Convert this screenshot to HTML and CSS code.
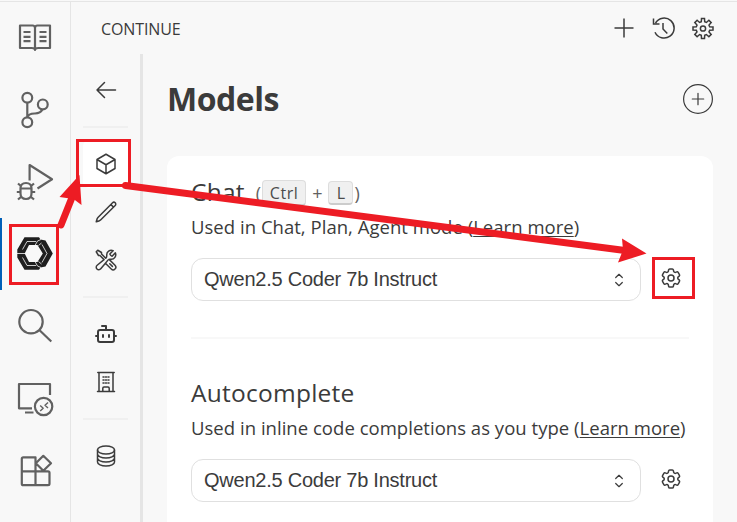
FILE: index.html
```html
<!DOCTYPE html>
<html lang="en">
<head>
<meta charset="utf-8">
<title>Continue</title>
<link rel="stylesheet" href="styles.css">
</head>
<body>
<div class="app">
  <nav class="activity">
    <svg viewBox="0 0 70 72"><path d="M20 23.500h12.500q2.500 0 2.500 2.500q0-2.500 2.500-2.500H50v22.500H38.500q-3.500 0-3.500 2q0-2-3.500-2H20zM35 26v22M23.500 30h7M23.500 34.800h7M23.500 39.200h7M39.500 30h7M39.500 34.800h7M39.500 39.200h7"/></svg>
    <svg viewBox="0 0 70 72"><circle cx="27.300" cy="23.700" r="4.900"/><circle cx="42.800" cy="30.400" r="4.900"/><circle cx="27.300" cy="48.300" r="4.900"/><path d="M27.300 28.600v14.800M42.500 35.300q-2 4.200-7.500 4.200q-6.500-.2-7.700 4"/></svg>
    <svg viewBox="0 0 70 72"><path d="M29.600 34.500V19L52 33.300L37.500 42.500"/><path d="M20.500 42.500q0-5.500 5.500-5.500t5.500 5.500v5q0 5.500-5.500 5.500t-5.500-5.500zM20.500 42.500h11M18 37.500l3.500 3M34 37.500l-3.500 3M16.800 46h3.700M31.500 46h3.700M18 53.500l3.500-3M34 53.500l-3.500-3"/></svg>
    <svg class="active" viewBox="0 0 70 72"><path class="ring" d="M24.500 19.200H39L40.500 21.500L45.500 22.500L52.800 35.500L45.500 48.500L40.500 49.500L39 51.800H24.500L17.300 39.500V31.500zM29 27L24.700 35.500L29 44H37.500L42.800 35.500L37.500 27z"/><path class="seams" d="M22.500 31.500L27 23.500H36M42 26.500L47 35.500L42 44.500M36 47.500H27L22.500 39.500M17 35.500h8M35 27.500l2.500-4.500l3.500-1.500M35 43.500l2.500 4.500l3.500 1.500M38.500 27.500l3-2.500M38.500 43.500l3 2.500"/></svg>
    <svg viewBox="0 0 70 72"><circle cx="31" cy="31.700" r="11.700"/><path d="M39.300 40L51.300 51.500"/></svg>
    <svg viewBox="0 0 70 72"><path d="M50 33V22H19v24.300h13M25 50.500h8.500"/><circle cx="43.600" cy="44.500" r="8.700"/><path class="thin" d="M40.200 43.500l3 2.800l-3 2.800M48 40.500l-3 2.800l3 2.800"/></svg>
    <svg viewBox="0 0 70 72"><path d="M21.800 24.800q0-1.500 1.500-1.500H35.500V51.200H23.300q-1.500 0-1.500-1.500zM21.800 37.300H48q1.500 0 1.500 1.500v11q0 1.400-1.500 1.400H35.500M43.300 21.800l7.700 7.500l-7.700 7.500l-7.500-7.500z"/></svg>
  </nav>
  <div class="panel">
    <header class="titlebar">
      <span class="title">CONTINUE</span>
      <div class="actions">
        <svg viewBox="0 0 24 24"><path d="M12 1.500v19M2.500 11h19"/></svg>
        <svg viewBox="0 0 24 24"><path d="M3 15.200A10 10 0 1 0 3.500 6M1.500 1.500v5.500h6M11 6v6l4.300 4.500"/></svg>
        <svg viewBox="0 0 24 24"><path d="M10.300 4.800L10.500 1.500h3l.2 3.300l1.700.7l2.500-2.200l2.300 2.300l-2.200 2.500l.7 1.700l3.300.2v3l-3.300.2l-.7 1.700l2.200 2.500l-2.300 2.300l-2.500-2.200l-1.700.7l-.2 3.300h-3l-.2-3.300l-1.700-.7l-2.500 2.200l-2.300-2.300L6 14.900l-.7-1.700L2 13v-3l3.300-.2L6 8.100L3.800 5.600l2.300-2.300L8.600 5.500z"/><circle cx="12" cy="11.500" r="2.600"/></svg>
      </div>
    </header>
    <div class="body">
      <nav class="sections">
        <div class="cell top"><svg viewBox="0 0 24 24"><path d="M10.500 4.500L3 12l7.500 7.500M3 12h18.500"/></svg></div>
        <hr>
        <div class="group">
          <div class="cell selected"><svg viewBox="0 0 24 24"><path d="M21 7.500l-9-5.250L3 7.500m18 0l-9 5.250m9-5.250v9l-9 5.250M3 7.500l9 5.250M3 7.500v9l9 5.250m0-9v9"/></svg></div>
          <div class="cell"><svg viewBox="0 0 24 24"><path d="M16.860 4.490l1.690-1.690a1.870 1.870 0 1 1 2.650 2.650L6.830 19.820a4.500 4.500 0 0 1-1.900 1.130L2.250 21.750l.8-2.680a4.500 4.500 0 0 1 1.130-1.900zM16.860 4.490L19.500 7.130"/></svg></div>
          <div class="cell"><svg viewBox="0 0 24 24"><path d="M11.420 15.170L17.250 21A2.650 2.650 0 0 0 21 17.250l-5.880-5.880M11.420 15.170l2.500-3.030c.31-.39.740-.63 1.200-.77.560-.16 1.160-.19 1.740-.14a4.500 4.500 0 0 0 4.490-6.340l-3.280 3.280a3 3 0 0 1-2.250-2.250l3.280-3.280a4.500 4.500 0 0 0-6.340 4.490c.09 1.070-.07 2.260-.9 2.940l-.1.090M11.420 15.170l-4.660 5.650a2.550 2.550 0 1 1-3.580-3.590l6.840-5.630M10.020 11.600L5.910 7.500H4.500L2.250 3.750l1.500-1.500L7.500 4.500v1.410l4.260 4.250M18.380 18.380l-2.630-2.630"/></svg></div>
        </div>
        <hr>
        <div class="group">
          <div class="cell"><svg class="bold" viewBox="0 0 24 24"><path d="M12 8V4H8"/><rect x="4" y="8" width="16" height="12" rx="2"/><path d="M2 14h2M20 14h2M9 13v2M15 13v2"/></svg></div>
          <div class="cell"><svg viewBox="0 0 24 24"><path d="M3.500 21.500h17M5 21.500v-19M19 21.500v-19M3.800 2.500h16.400M9 7h1M14 7h1M11.500 7h1M9 10h1M11.500 10h1M14 10h1M9 13h1M11.500 13h1M14 13h1M8.800 21.500v-3.300q0-1.200 1.200-1.200h4q1.200 0 1.200 1.200v3.300"/></svg></div>
        </div>
        <hr>
        <div class="cell data"><svg viewBox="0 0 24 24"><ellipse cx="12" cy="6" rx="8.500" ry="4"/><path d="M3.500 6v12c0 2.200 3.800 4 8.500 4s8.500-1.800 8.500-4V6M3.500 10c0 2.200 3.800 4 8.500 4s8.500-1.800 8.500-4M3.500 14c0 2.200 3.800 4 8.500 4s8.500-1.800 8.500-4"/></svg></div>
      </nav>
      <main class="content">
        <div class="heading">
          <h1>Models</h1>
          <span class="add"><svg viewBox="0 0 30 30"><circle cx="15" cy="15" r="14.400"/><path d="M15 9.300v11.400M9.300 15h11.400"/></svg></span>
        </div>
        <div class="card">
          <section>
            <h2><span>Chat</span><span class="keys">(<kbd class="ctrl">Ctrl</kbd><i>+</i><kbd class="letter">L</kbd>)</span></h2>
            <p>Used in Chat, Plan, Agent mode (<u>Learn more</u>)</p>
            <div class="row">
              <div class="select"><span>Qwen2.5 Coder 7b Instruct</span><svg viewBox="0 0 10 14"><path d="M1.700 4.500L5 1.300l3.300 3.200M1.700 9.500L5 12.700l3.300-3.200"/></svg></div>
              <svg class="gear" viewBox="0 0 24 24"><path d="M9.590 3.940c.09-.54.560-.94 1.110-.94h2.600c.55 0 1.020.4 1.110.94l.21 1.280c.06.380.31.690.65.870.07.040.15.090.22.130.32.200.72.260 1.080.12l1.220-.45a1.130 1.130 0 0 1 1.370.49l1.300 2.240c.27.480.17 1.080-.26 1.430l-1 .83c-.3.240-.44.610-.43.990v.25c-.01.380.13.750.43.990l1 .83c.42.350.53.950.26 1.430l-1.300 2.240c-.27.480-.85.690-1.370.49l-1.220-.45c-.35-.13-.75-.07-1.080.12l-.22.130c-.33.180-.58.490-.64.870l-.22 1.280c-.09.550-.56.950-1.110.95h-2.600c-.55 0-1.020-.4-1.110-.95l-.21-1.280c-.06-.37-.31-.69-.65-.87l-.22-.13c-.32-.19-.72-.25-1.070-.12l-1.220.45c-.52.200-1.100-.01-1.370-.49l-1.300-2.240a1.130 1.130 0 0 1 .26-1.430l1-.83c.29-.24.440-.61.430-.99v-.25c.01-.38-.14-.75-.43-.99l-1-.83a1.130 1.130 0 0 1-.26-1.430l1.300-2.240c.27-.48.850-.69 1.370-.49l1.220.45c.35.140.750.080 1.070-.12l.22-.13c.34-.18.590-.49.650-.87z"/><circle cx="12" cy="12" r="3"/></svg>
            </div>
          </section>
          <hr>
          <section>
            <h2><span>Autocomplete</span></h2>
            <p>Used in inline code completions as you type (<u>Learn more</u>)</p>
            <div class="row">
              <div class="select"><span>Qwen2.5 Coder 7b Instruct</span><svg viewBox="0 0 10 14"><path d="M1.700 4.500L5 1.300l3.300 3.200M1.700 9.500L5 12.700l3.300-3.200"/></svg></div>
              <svg class="gear" viewBox="0 0 24 24"><path d="M9.590 3.940c.09-.54.560-.94 1.110-.94h2.600c.55 0 1.020.4 1.110.94l.21 1.280c.06.380.31.690.65.870.07.040.15.090.22.130.32.200.72.260 1.080.12l1.220-.45a1.130 1.130 0 0 1 1.370.49l1.300 2.240c.27.480.17 1.080-.26 1.430l-1 .83c-.3.240-.44.610-.43.990v.25c-.01.380.13.750.43.990l1 .83c.42.350.53.950.26 1.430l-1.300 2.240c-.27.480-.85.690-1.370.49l-1.220-.45c-.35-.13-.75-.07-1.080.12l-.22.130c-.33.180-.58.490-.64.870l-.22 1.280c-.09.550-.56.950-1.110.95h-2.600c-.55 0-1.020-.4-1.110-.95l-.21-1.280c-.06-.37-.31-.69-.65-.87l-.22-.13c-.32-.19-.72-.25-1.070-.12l-1.220.45c-.52.200-1.100-.01-1.370-.49l-1.300-2.240a1.130 1.130 0 0 1 .26-1.430l1-.83c.29-.24.440-.61.430-.99v-.25c.01-.38-.14-.75-.43-.99l-1-.83a1.130 1.130 0 0 1-.26-1.430l1.300-2.240c.27-.48.850-.69 1.370-.49l1.220.45c.35.140.750.080 1.070-.12l.22-.13c.34-.18.590-.49.650-.87z"/><circle cx="12" cy="12" r="3"/></svg>
            </div>
          </section>
        </div>
      </main>
    </div>
  </div>
</div>
<svg class="annotations" viewBox="0 0 737 522">
  <path class="box" d="M10.500 225.500h47v58h-47zM77.500 140.500h52v45h-52zM653.500 258.500h40v39h-40z"/>
  <path class="shaft" d="M61 225L73 195M125.500 185.500L625 250.500"/>
  <path class="head" d="M79.500 175L81.500 205L73.500 199L59.500 197zM646.500 253.500L622 238.500L623 250L618 262.500z"/>
</svg>
</body>
</html>
```
FILE: styles.css
```css
* { box-sizing: border-box; }
body {
  margin: 0;
  width: 737px;
  height: 522px;
  overflow: hidden;
  background: #f8f8f8;
  color: #3b3b3b;
  font-family: "Open Sans", "Noto Sans", sans-serif;
}
svg { display: block; fill: none; stroke: currentColor; stroke-width: 1.5; stroke-linejoin: round; stroke-linecap: round; }
hr { border: 0; margin: 0; }
.app { display: flex; height: 522px; border-top: 1px solid #f8f8f8; box-shadow: inset 0 1px #e5e5e5; }
.activity { width: 71px; flex: none; padding-top: 1px; border-right: 1px solid #e5e5e5; color: #616161; }
.activity svg { width: 70px; height: 72px; stroke-width: 2.2; stroke-linecap: butt; }
.activity .thin { stroke-width: 1.4; }
.activity .active { color: #1f1f1f; box-shadow: inset 2px 0 #005fb8; }
.activity .ring { fill: currentColor; fill-rule: evenodd; stroke: none; }
.activity .seams { stroke: #f8f8f8; stroke-width: .8; }
.panel { flex: 1; min-width: 0; display: flex; flex-direction: column; }
.titlebar { height: 53px; flex: none; display: flex; justify-content: space-between; align-items: center; padding: 2px 22px 0 30px; }
.title { font-size: 16px; letter-spacing: -.1px; }
.actions { display: flex; gap: 15.5px; }
.actions svg { width: 24px; height: 24px; stroke-linejoin: miter; stroke-linecap: butt; }
.body { flex: 1; min-height: 0; display: flex; }
.sections { width: 72px; flex: none; border-right: 3px solid #e5e5e5; display: flex; flex-direction: column; align-items: center; }
.sections hr { width: 45px; height: 2px; background: #f0f0f0; }
.cell { width: 46px; height: 48px; display: flex; align-items: center; justify-content: center; }
.cell svg { width: 24px; height: 24px; }
.cell .bold { stroke-width: 2; }
.top { height: 72px; }
.group { padding: 12px 0; }
.selected { background: #fff; border-radius: 6px; }
.data { height: 72px; }
.content { flex: 1; padding: 0 24px; min-width: 0; }
.heading { height: 102px; display: flex; align-items: center; justify-content: space-between; padding-bottom: 12px; }
h1 { margin: 0; font-size: 32px; line-height: 40px; font-weight: 700; letter-spacing: -.5px; }
.add svg { width: 30px; height: 30px; stroke-width: 1.2; }
.card { height: 380px; background: #fff; border-radius: 12px; padding: 18px 24px; }
section { height: 163px; }
h2 { margin: 0; height: 36px; padding-bottom: 1px; display: flex; align-items: center; font-size: 24.5px; letter-spacing: .25px; font-weight: 400; white-space: nowrap; }
.keys { display: flex; align-items: center; margin: 3px 0 0 11px; font-size: 18px; letter-spacing: 0; color: #616161; }
.keys i { font-style: normal; margin: 0 6px; }
kbd { display: flex; align-items: center; justify-content: center; font: 16px "Open Sans", sans-serif; color: #4b4b4b; background: #f0f0f0; border: 1px solid #ddd; border-bottom: 2px solid #ccc; border-radius: 4px; }
.ctrl { width: 44px; height: 26px; margin-left: 1px; letter-spacing: .6px; }
.letter { width: 25px; height: 24px; margin-right: 1px; }
p { margin: 0; height: 35px; font-size: 18.5px; line-height: 33px; white-space: nowrap; letter-spacing: .03px; }
u { text-decoration-thickness: 1px; text-underline-offset: 2px; }
.row { display: flex; align-items: center; margin-top: 13px; }
.select { width: 450px; height: 43px; flex: none; border: 1px solid #e0e0e0; border-radius: 12px; padding: 0 16px 0 12px; display: flex; align-items: center; justify-content: space-between; font: 20px "Liberation Sans", sans-serif; letter-spacing: -.24px; }
.select svg { width: 10px; height: 14px; stroke-width: 1.2; }
.gear { width: 24px; height: 24px; margin-left: 18px; margin-bottom: 4px; stroke-width: 1.5; }
.card hr { height: 2px; background: #f8f8f8; margin-bottom: 36px; }
.annotations { position: absolute; left: 0; top: 0; width: 737px; height: 522px; color: #ed1c24; pointer-events: none; }
.annotations path { stroke-linejoin: miter; }
.annotations .box { stroke-width: 3; }
.annotations .shaft { stroke-width: 7; }
.annotations .head { fill: currentColor; stroke: none; }
```
